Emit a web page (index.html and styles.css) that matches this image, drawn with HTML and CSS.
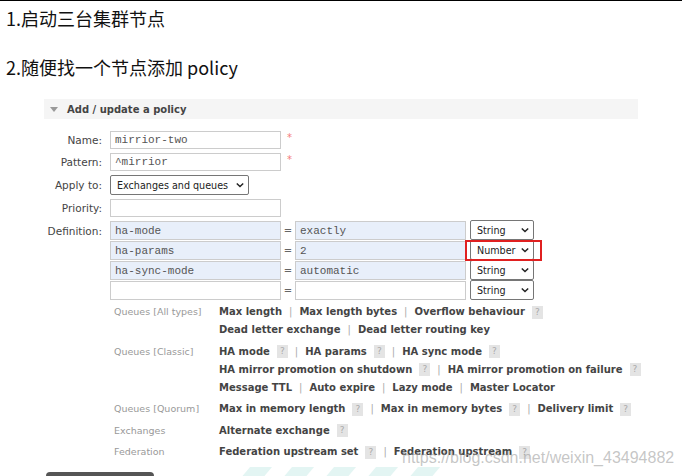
FILE: index.html
```html
<!DOCTYPE html>
<html>
  <head>
    <meta charset="utf-8">
    <link rel="stylesheet" href="styles.css">
  </head>
  <body>
    <p class="step">1.启动三台集群节点</p>
    <p class="step">2.随便找一个节点添加 policy</p>

    <div class="panel">
      <h2 class="panel-head"><span class="tri"></span>Add / update a policy</h2>

      <div class="form">
        <label class="lbl">Name:</label>
        <div class="field"><input class="text" type="text" value="mirrior-two"><span class="req">*</span></div>

        <label class="lbl">Pattern:</label>
        <div class="field"><input class="text" type="text" value="^mirrior"><span class="req">*</span></div>

        <label class="lbl">Apply to:</label>
        <div class="field">
          <div class="select wide">Exchanges and queues<svg viewBox="0 0 10 6"><path d="M1 1l4 4 4-4" /></svg></div>
        </div>

        <label class="lbl">Priority:</label>
        <div class="field"><input class="text" type="text" value=""></div>

        <label class="lbl def">Definition:</label>
        <div class="defs">
          <div class="def-row">
            <input class="text key" type="text" value="ha-mode"><span class="eq">=</span>
            <input class="text key" type="text" value="exactly">
            <div class="select type">String<svg viewBox="0 0 10 6"><path d="M1 1l4 4 4-4" /></svg></div>
          </div>
          <div class="def-row">
            <input class="text key" type="text" value="ha-params"><span class="eq">=</span>
            <input class="text key" type="text" value="2">
            <div class="select type marked">Number<svg viewBox="0 0 10 6"><path d="M1 1l4 4 4-4" /></svg></div>
          </div>
          <div class="def-row">
            <input class="text key" type="text" value="ha-sync-mode"><span class="eq">=</span>
            <input class="text key" type="text" value="automatic">
            <div class="select type">String<svg viewBox="0 0 10 6"><path d="M1 1l4 4 4-4" /></svg></div>
          </div>
          <div class="def-row">
            <input class="text" type="text" value=""><span class="eq">=</span>
            <input class="text" type="text" value="">
            <div class="select type">String<svg viewBox="0 0 10 6"><path d="M1 1l4 4 4-4" /></svg></div>
          </div>
        </div>
      </div>

      <div class="help">
        <div class="help-lbl">Queues [All types]</div>
        <div class="help-links">
          <p><b>Max length</b><i>|</i><b>Max length bytes</b><i>|</i><b>Overflow behaviour</b><em>?</em></p>
          <p><b>Dead letter exchange</b><i>|</i><b>Dead letter routing key</b></p>
        </div>

        <div class="help-lbl">Queues [Classic]</div>
        <div class="help-links">
          <p><b>HA mode</b><em>?</em><i>|</i><b>HA params</b><em>?</em><i>|</i><b>HA sync mode</b><em>?</em></p>
          <p><b>HA mirror promotion on shutdown</b><em>?</em><i>|</i><b>HA mirror promotion on failure</b><em>?</em></p>
          <p><b>Message TTL</b><i>|</i><b>Auto expire</b><i>|</i><b>Lazy mode</b><i>|</i><b>Master Locator</b></p>
        </div>

        <div class="help-lbl">Queues [Quorum]</div>
        <div class="help-links">
          <p><b>Max in memory length</b><em>?</em><i>|</i><b>Max in memory bytes</b><em>?</em><i>|</i><b>Delivery limit</b><em>?</em></p>
        </div>

        <div class="help-lbl">Exchanges</div>
        <div class="help-links">
          <p><b>Alternate exchange</b><em>?</em></p>
        </div>

        <div class="help-lbl">Federation</div>
        <div class="help-links">
          <p><b>Federation upstream set</b><em>?</em><i>|</i><b>Federation upstream</b><em>?</em></p>
        </div>
      </div>

      <div class="btn"></div>
    </div>

    <div class="wm-shapes"><span></span><span></span><span></span><span></span><span></span></div>
    <div class="watermark">https://blog.csdn.net/weixin_43494882</div>
  </body>
</html>
```

FILE: styles.css
```css
*{
    margin:0;
    padding:0;
    box-sizing:border-box;
}
body{
    position:relative;
    width:682px;
    height:476px;
    overflow:hidden;
    border-top:1px solid #000;
    background:#fff;
    font-family:"DejaVu Sans", Verdana, sans-serif;
    font-size:10px;
    color:#444;
}
.step{
    font-family:"Noto Sans CJK SC", sans-serif;
    font-size:18px;
    line-height:34px;
    color:#111;
    padding-left:6px;
    margin-bottom:15px;
}

.panel{
    margin-left:44px;
    width:594px;
}
.panel-head{
    display:flex;
    align-items:center;
    height:20px;
    padding-left:6px;
    background:#f5f5f5;
    font-size:10px;
    font-weight:bold;
    color:#444;
}
.tri{
    width:0;
    height:0;
    border-left:4px solid transparent;
    border-right:4px solid transparent;
    border-top:5px solid #999;
    margin-right:9px;
}

.form{
    display:grid;
    grid-template-columns:58px 1fr;
    column-gap:8px;
    row-gap:4px;
    padding-top:12px;
    align-items:center;
}
.lbl{
    text-align:right;
    color:#444;
    font-size:10.5px;
}
.lbl.def{
    align-self:start;
    line-height:21px;
}
.field{
    display:flex;
    align-items:center;
}
.text{
    width:171px;
    height:18px;
    border:1px solid #ccc;
    background:#fff;
    padding:0 4px;
    font-family:"Liberation Mono", monospace;
    font-size:11px;
    color:#555;
    outline:none;
}
.text.key{
    background:#e8effa;
}
.req{
    color:#f47b7b;
    margin-left:6px;
    margin-top:-6px;
    font-size:10px;
}
.select{
    display:flex;
    align-items:center;
    justify-content:space-between;
    height:20px;
    border:1px solid #767676;
    border-radius:2px;
    background:#fff;
    padding:0 4px 0 6px;
    font-size:9.6px;
    white-space:nowrap;
    color:#222;
}
.select svg{
    flex-shrink:0;
    width:8px;
    height:6px;
    margin-left:4px;
    fill:none;
    stroke:#222;
    stroke-width:1.8;
}
.select.wide{
    width:139px;
}
.select.type{
    width:64px;
    margin-left:4px;
}
.marked{
    position:relative;
}
.marked::after{
    content:"";
    position:absolute;
    left:-6px;
    right:-9px;
    top:-1px;
    bottom:-2px;
    border:2px solid #e02020;
}

.defs{
    display:flex;
    flex-direction:column;
    gap:1px;
}
.def-row{
    display:flex;
    align-items:center;
}
.def-row .text{
    height:19px;
}
.def-row .select{
    height:20px;
    margin-top:-1px;
}
.eq{
    width:14px;
    text-align:center;
    color:#666;
}

.help{
    display:grid;
    grid-template-columns:105px 1fr;
    padding-left:70px;
    margin-top:3px;
    line-height:18px;
}
.help-lbl{
    color:#999;
    font-size:9.5px;
    margin-bottom:3.5px;
}
.help-links{
    margin-bottom:3.5px;
}
.help-links p{
    display:flex;
    align-items:center;
    white-space:nowrap;
}
.help-links b{
    flex-shrink:0;
    color:#444;
    font-weight:bold;
    font-size:10px;
}
.help-links i{
    font-style:normal;
    color:#aaa;
    margin:0 7px;
}
.help-links em{
    flex-shrink:0;
    font-style:normal;
    display:inline-block;
    width:11px;
    height:13px;
    line-height:13px;
    background:#e4e4e4;
    color:#aaa;
    font-size:9px;
    text-align:center;
    margin-left:7px;
}

.btn{
    margin:7px 0 0 2px;
    width:108px;
    height:8px;
    border-radius:4px 4px 0 0;
    background:#555;
}

.watermark{
    position:absolute;
    left:402px;
    top:448px;
    font-family:"Liberation Sans", Arial, sans-serif;
    font-size:16px;
    color:rgba(160,160,160,0.6);
}
.wm-shapes{
    position:absolute;
    left:245px;
    top:466px;
    display:flex;
    gap:20px;
}
.wm-shapes span{
    width:22px;
    height:12px;
    background:#e3f5f3;
    transform:skewX(-40deg);
}
```
